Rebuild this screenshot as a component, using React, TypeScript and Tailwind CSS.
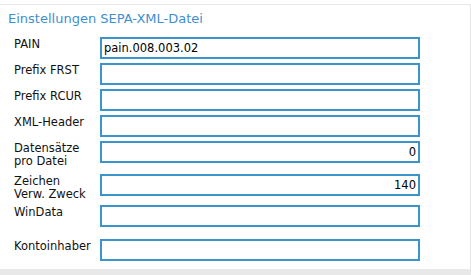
type Field = {
  label: string[]
  value: string
  align?: 'left' | 'right'
  h: string
}

const fields: Field[] = [
  { label: ['PAIN'], value: 'pain.008.003.02', h: 'h-[26px]' },
  { label: ['Prefix FRST'], value: '', h: 'h-[26px]' },
  { label: ['Prefix RCUR'], value: '', h: 'h-[26px]' },
  { label: ['XML-Header'], value: '', h: 'h-[26px]' },
  { label: ['Datensätze', 'pro Datei'], value: '0', align: 'right', h: 'h-[33px]' },
  { label: ['Zeichen', 'Verw. Zweck'], value: '140', align: 'right', h: 'h-[31px]' },
  { label: ['WinData'], value: '', h: 'h-[34px]' },
  { label: ['Kontoinhaber'], value: '', h: 'h-[22px]' },
]

export default function App() {
  return (
    <div className="w-[471px] h-[275px] bg-white flex flex-col pt-[4px] font-['DejaVu_Sans',Verdana,sans-serif]">
      <div className="flex-1 border-t border-r border-[#e6e6e6] bg-white pt-[6px]">
        <h2 className="pl-[8px] text-[13px] leading-[16px] font-normal text-[#3f8fcf]">
          Einstellungen SEPA-XML-Datei
        </h2>

        {/* Felder */}
        <div className="mt-[10px] flex flex-col">
          {fields.map((f) => (
            <div key={f.label.join(' ')} className={`flex items-start ${f.h}`}>
              <div className="w-[100px] pl-[14px] pt-[1px] text-[11.5px] leading-[13px] text-[#111]">
                {f.label.map((l) => (
                  <div key={l}>{l}</div>
                ))}
              </div>
              <input
                type="text"
                readOnly
                value={f.value}
                className={`w-[320px] h-[22px] border-2 border-[#3c94cd] bg-white px-[2px] text-[11.5px] text-black outline-none ${
                  f.align === 'right' ? 'text-right' : 'text-left'
                }`}
              />
            </div>
          ))}
        </div>
      </div>
      <div className="h-[6px] bg-[#e8e8e8]" />
    </div>
  )
}
